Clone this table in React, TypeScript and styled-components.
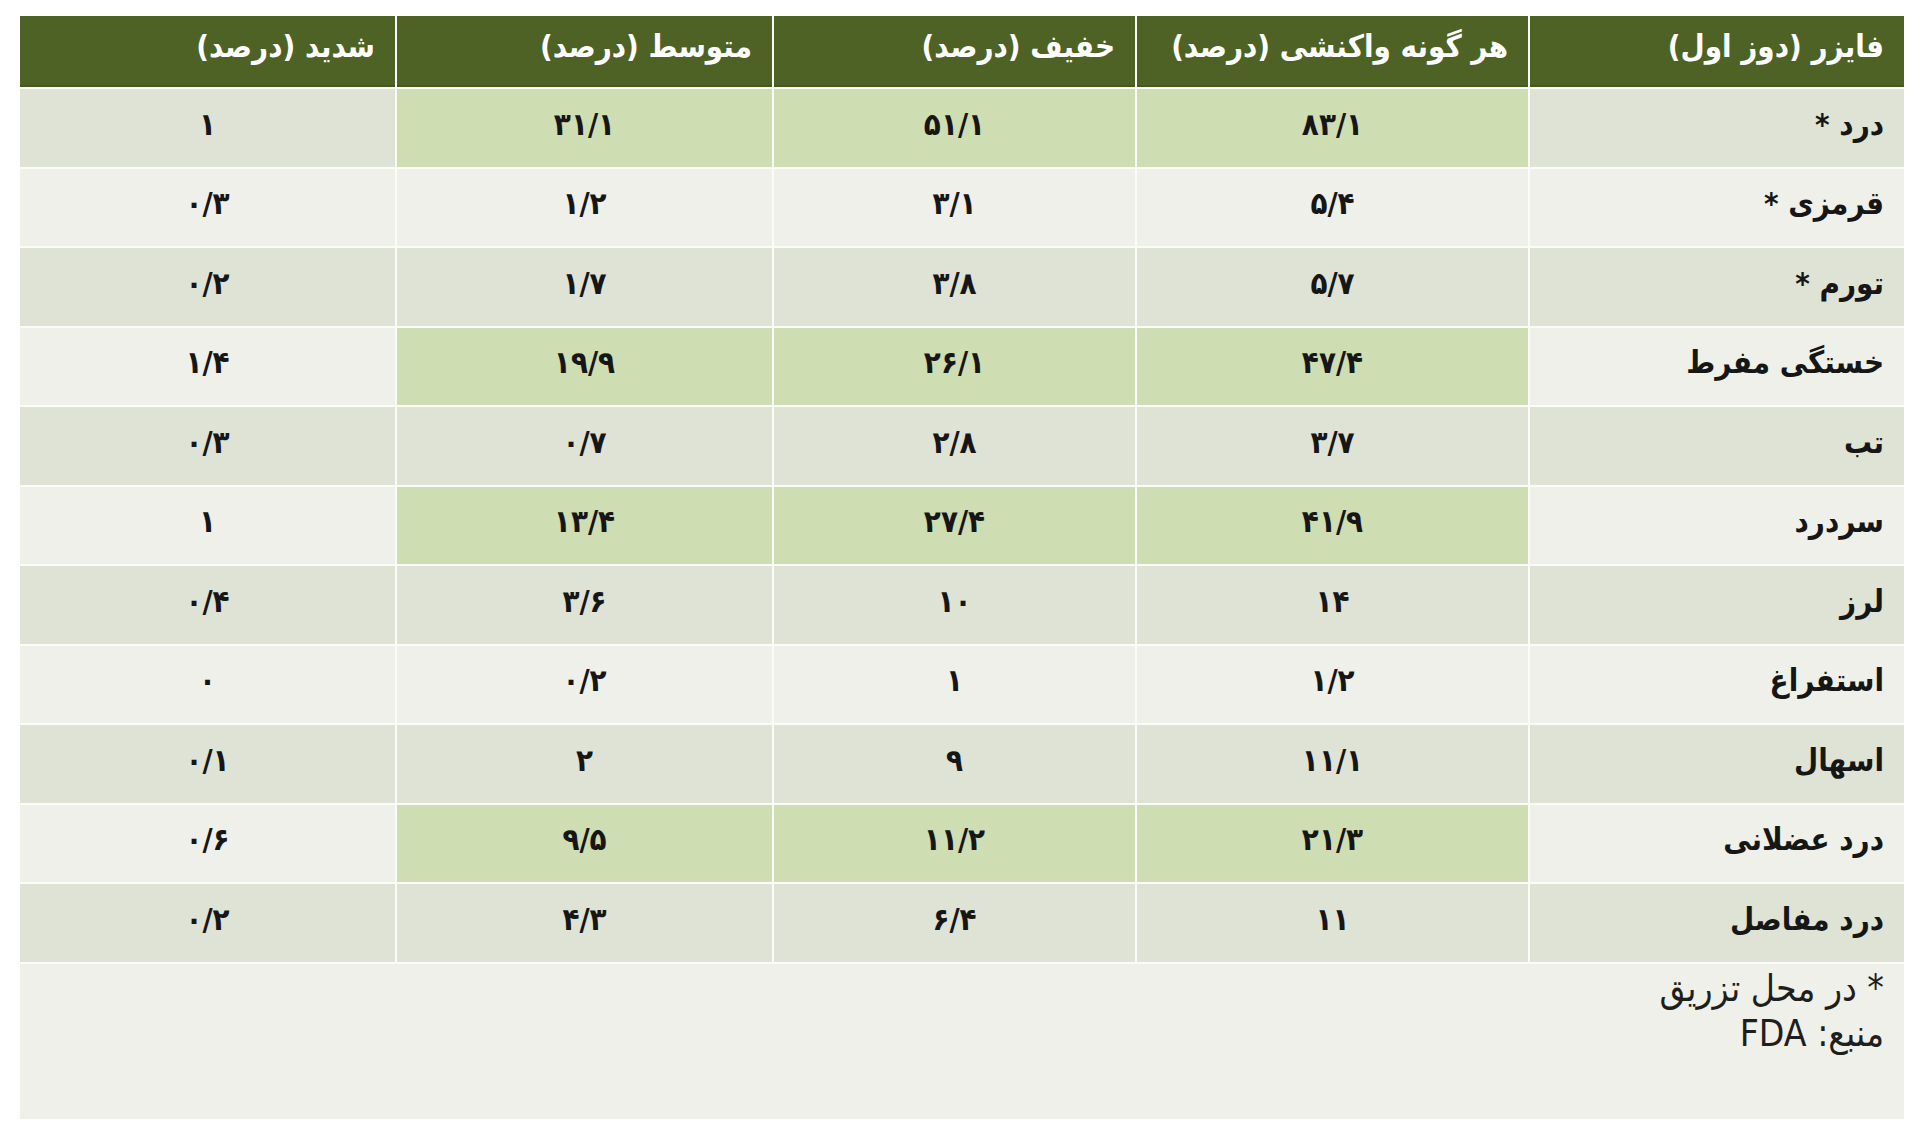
import React from 'react'
import styled, { createGlobalStyle } from 'styled-components'

type Row = {
	label: string
	values: string[]
	highlight?: boolean
}

const headers: string[] = [
	'فایزر (دوز اول)',
	'هر گونه واکنشی (درصد)',
	'خفیف (درصد)',
	'متوسط (درصد)',
	'شدید (درصد)',
]

const rows: Row[] = [
	{ label: 'درد *', values: ['۸۳/۱', '۵۱/۱', '۳۱/۱', '۱'], highlight: true },
	{ label: 'قرمزی *', values: ['۵/۴', '۳/۱', '۱/۲', '۰/۳'] },
	{ label: 'تورم *', values: ['۵/۷', '۳/۸', '۱/۷', '۰/۲'] },
	{ label: 'خستگی مفرط', values: ['۴۷/۴', '۲۶/۱', '۱۹/۹', '۱/۴'], highlight: true },
	{ label: 'تب', values: ['۳/۷', '۲/۸', '۰/۷', '۰/۳'] },
	{ label: 'سردرد', values: ['۴۱/۹', '۲۷/۴', '۱۳/۴', '۱'], highlight: true },
	{ label: 'لرز', values: ['۱۴', '۱۰', '۳/۶', '۰/۴'] },
	{ label: 'استفراغ', values: ['۱/۲', '۱', '۰/۲', '۰'] },
	{ label: 'اسهال', values: ['۱۱/۱', '۹', '۲', '۰/۱'] },
	{ label: 'درد عضلانی', values: ['۲۱/۳', '۱۱/۲', '۹/۵', '۰/۶'], highlight: true },
	{ label: 'درد مفاصل', values: ['۱۱', '۶/۴', '۴/۳', '۰/۲'] },
]

const GlobalStyle = createGlobalStyle`
	html, body {
		margin: 0;
		padding: 0;
		background: #ffffff;
	}
	body {
		font-family: 'DejaVu Sans Condensed', 'DejaVu Sans', sans-serif;
	}
`

export default function App() {
	return (
		<>
			<GlobalStyle />
			<Page>
				<Table>
					{headers.map(h => (
						<HeadCell key={h}>{h}</HeadCell>
					))}
					{rows.map((row, i) => {
						const band = i % 2 === 0 ? 'dark' : 'light'
						return (
							<React.Fragment key={row.label}>
								<Cell $band={band} $label>
									{row.label}
								</Cell>
								{row.values.map((v, j) => (
									<Cell
										key={`${row.label}-${j}`}
										$band={row.highlight && j < 3 ? 'green' : band}
									>
										{v}
									</Cell>
								))}
							</React.Fragment>
						)
					})}
					<Footer>
						<span>* در محل تزریق</span>
						<span>منبع: FDA</span>
					</Footer>
				</Table>
			</Page>
		</>
	)
}

const Page = styled.div`
	width: 1920px;
	height: 1125px;
	padding: 16px 16px 0 20px;
	box-sizing: border-box;
	background: #ffffff;
`

const Table = styled.div`
	direction: rtl;
	display: grid;
	grid-template-columns: 374px 391px 361px 375px 375px;
	grid-template-rows: 71px repeat(11, 77.5px) 155px;
	gap: 2px 2px;
	width: 1884px;
	background: #fbfcf7;
`

const HeadCell = styled.div`
	display: flex;
	align-items: center;
	padding: 0 20px 12px;
	background: #4e6225;
	color: #ffffff;
	font-size: 31px;
	font-weight: 700;
	white-space: nowrap;
	box-shadow: inset 0 -2px 0 #465a1f;
`

const bandColor: Record<string, string> = {
	dark: '#dee3d5',
	light: '#eef0e9',
	green: '#cfddb3',
}

const Cell = styled.div<{ $band: string; $label?: boolean }>`
	display: flex;
	align-items: center;
	justify-content: ${p => (p.$label ? 'flex-start' : 'center')};
	padding: 0 20px 8px;
	background: ${p => bandColor[p.$band]};
	color: #161616;
	font-size: 31px;
	font-weight: 700;
	white-space: nowrap;
`

const Footer = styled.div`
	grid-column: 1 / -1;
	display: flex;
	flex-direction: column;
	align-items: flex-start;
	padding: 2px 20px 0;
	background: #eff0ea;
	color: #1e1e1e;
	font-size: 37px;
	line-height: 45px;
`
